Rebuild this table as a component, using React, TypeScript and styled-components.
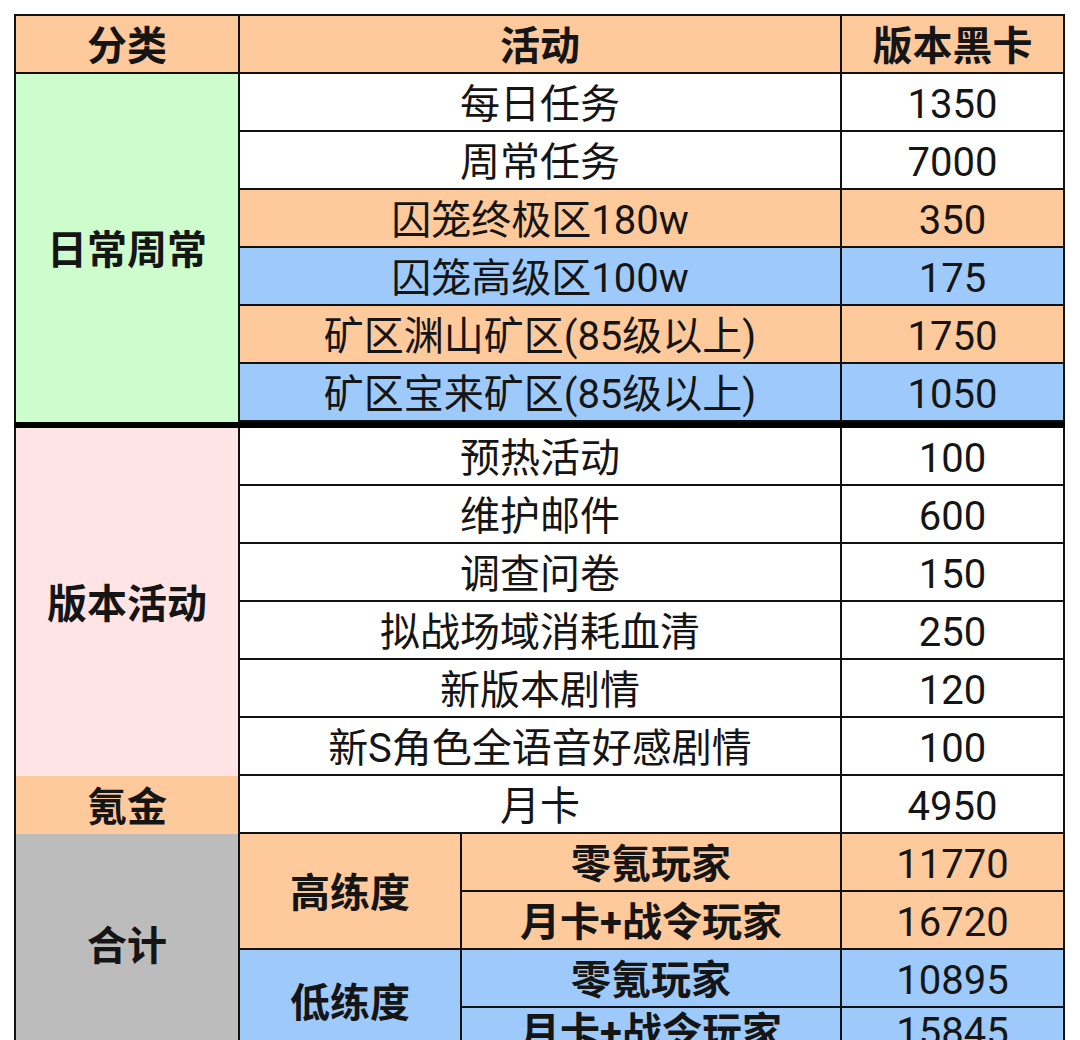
import React from 'react';
import styled, { createGlobalStyle } from 'styled-components';

const GlobalStyle = createGlobalStyle`
  html, body {
    margin: 0;
    padding: 0;
    background: #ffffff;
  }
  body {
    font-family: Roboto, "Noto Sans CJK SC", "Noto Sans", sans-serif;
    color: #151515;
  }
`;

const colors = {
  white: '#ffffff',
  orange: '#fec99b',
  blue: '#9dcafa',
  green: '#cdfccd',
  pink: '#fee4e4',
  gray: '#bcbcbc',
};

type Tone = keyof typeof colors;

const Page = styled.div`
  padding: 14px 0 0 14px;
  height: 1040px;
  overflow: hidden;
  box-sizing: border-box;
`;

const Table = styled.div`
  display: grid;
  grid-template-columns: 224px 222px 380px 223px;
  grid-template-rows: repeat(7, 58px) 6px repeat(10, 58px);
  border-top: 2px solid #111;
  border-left: 2px solid #111;
  width: max-content;
`;

const Cell = styled.div<{ $tone?: Tone; $bold?: boolean; $noBottom?: boolean; $span?: number; $rows?: number; $col?: number }>`
  display: flex;
  align-items: center;
  justify-content: center;
  box-sizing: border-box;
  background: ${p => colors[p.$tone ?? 'white']};
  border-right: 2px solid #111;
  border-bottom: ${p => (p.$noBottom ? 'none' : '2px solid #111')};
  font-size: 40px;
  font-weight: ${p => (p.$bold ? 700 : 400)};
  line-height: 1;
  padding-top: 5px;
  white-space: nowrap;
  grid-column: ${p => (p.$col ? `${p.$col} / span 1` : `span ${p.$span ?? 1}`)};
  grid-row: span ${p => p.$rows ?? 1};
`;

const Divider = styled.div`
  grid-column: 1 / -1;
  background: #000;
  margin-left: -2px;
`;

type Row = { name: string; value: string; tone?: Tone };

const daily: Row[] = [
  { name: '每日任务', value: '1350' },
  { name: '周常任务', value: '7000' },
  { name: '囚笼终极区180w', value: '350', tone: 'orange' },
  { name: '囚笼高级区100w', value: '175', tone: 'blue' },
  { name: '矿区渊山矿区(85级以上)', value: '1750', tone: 'orange' },
  { name: '矿区宝来矿区(85级以上)', value: '1050', tone: 'blue' },
];

const events: Row[] = [
  { name: '预热活动', value: '100' },
  { name: '维护邮件', value: '600' },
  { name: '调查问卷', value: '150' },
  { name: '拟战场域消耗血清', value: '250' },
  { name: '新版本剧情', value: '120' },
  { name: '新S角色全语音好感剧情', value: '100' },
];

const totals: { level: string; tone: Tone; rows: Row[] }[] = [
  {
    level: '高练度',
    tone: 'orange',
    rows: [
      { name: '零氪玩家', value: '11770' },
      { name: '月卡+战令玩家', value: '16720' },
    ],
  },
  {
    level: '低练度',
    tone: 'blue',
    rows: [
      { name: '零氪玩家', value: '10895' },
      { name: '月卡+战令玩家', value: '15845' },
    ],
  },
];

const ActivityRows = ({ rows }: { rows: Row[] }) => (
  <>
    {rows.map((r, i) => (
      <React.Fragment key={i}>
        <Cell $span={2} $tone={r.tone}>{r.name}</Cell>
        <Cell $tone={r.tone}>{r.value}</Cell>
      </React.Fragment>
    ))}
  </>
);

export default function App() {
  return (
    <>
      <GlobalStyle />
      <Page>
        <Table>
          <Cell $tone="orange" $bold>分类</Cell>
          <Cell $tone="orange" $bold $span={2}>活动</Cell>
          <Cell $tone="orange" $bold>版本黑卡</Cell>

          <Cell $tone="green" $bold $rows={6} $noBottom>日常周常</Cell>
          <ActivityRows rows={daily} />

          <Divider />

          <Cell $tone="pink" $bold $rows={6} $noBottom>版本活动</Cell>
          <ActivityRows rows={events} />

          <Cell $tone="orange" $bold $noBottom>氪金</Cell>
          <Cell $span={2}>月卡</Cell>
          <Cell>4950</Cell>

          <Cell $tone="gray" $bold $rows={4} $noBottom>合计</Cell>
          {totals.map(group => (
            <React.Fragment key={group.level}>
              <Cell $tone={group.tone} $bold $rows={2}>{group.level}</Cell>
              {group.rows.map((r, i) => (
                <React.Fragment key={i}>
                  <Cell $tone={group.tone} $bold $col={3}>{r.name}</Cell>
                  <Cell $tone={group.tone}>{r.value}</Cell>
                </React.Fragment>
              ))}
            </React.Fragment>
          ))}
        </Table>
      </Page>
    </>
  );
}
